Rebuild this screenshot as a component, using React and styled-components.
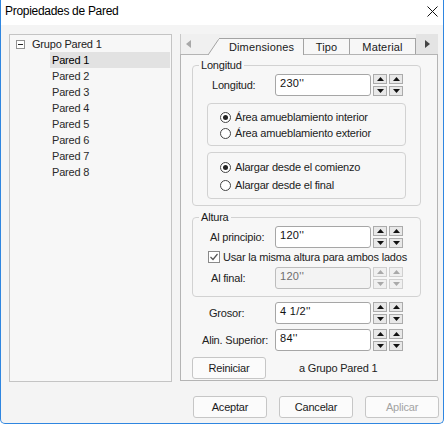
import React from 'react'
import styled, { createGlobalStyle } from 'styled-components'

const GlobalStyle = createGlobalStyle`
  html, body {
    margin: 0;
    padding: 0;
    background: #ffffff;
  }
  body {
    font-family: "Liberation Sans", Arial, sans-serif;
    font-size: 11px;
    color: #1a1a1a;
  }
  * { box-sizing: border-box; }
`

const treeItems = ['Pared 1', 'Pared 2', 'Pared 3', 'Pared 4', 'Pared 5', 'Pared 6', 'Pared 7', 'Pared 8']

function Spin({ disabled }) {
  return (
    <SpinGroup>
      {['up', 'up', 'down', 'down'].map((dir, i) => (
        <SpinBtn key={i} disabled={disabled}>
          <svg width="7" height="4" viewBox="0 0 7 4">
            {dir === 'up'
              ? <polygon points="0,4 7,4 3.5,0" />
              : <polygon points="0,0 7,0 3.5,4" />}
          </svg>
        </SpinBtn>
      ))}
    </SpinGroup>
  )
}

function Radio({ checked, children }) {
  return (
    <RadioItem>
      <svg width="11" height="11" viewBox="0 0 11 11">
        <circle cx="5.5" cy="5.5" r="5" fill="#fff" stroke="#444" strokeWidth="1" />
        {checked && <circle cx="5.5" cy="5.5" r="2.5" fill="#222" />}
      </svg>
      <span>{children}</span>
    </RadioItem>
  )
}

function Field({ label, value, labelLeft, labelWidth, disabled }) {
  return (
    <Row>
      <Label left={labelLeft} width={labelWidth}>{label}</Label>
      <Input disabled={disabled}>{value}</Input>
      <Spin disabled={disabled} />
    </Row>
  )
}

export default function App() {
  return (
    <>
      <GlobalStyle />
      <Window>
        <TitleBar>
          <Title>Propiedades de Pared</Title>
          <CloseBtn>
            <svg width="11" height="11" viewBox="0 0 11 11">
              <path d="M0.5 0.5 L10.5 10.5 M10.5 0.5 L0.5 10.5" stroke="#111" strokeWidth="1" />
            </svg>
          </CloseBtn>
        </TitleBar>
        <Body>
          <Main>
            <Tree>
              <TreeRow>
                <Expander>
                  <svg width="9" height="9" viewBox="0 0 9 9">
                    <rect x="0.5" y="0.5" width="8" height="8" fill="#fff" stroke="#919191" />
                    <path d="M2 4.5 H7" stroke="#222" />
                  </svg>
                </Expander>
                <TreeText>Grupo Pared 1</TreeText>
              </TreeRow>
              {treeItems.map((t, i) => (
                <TreeChild key={t} selected={i === 0}>{t}</TreeChild>
              ))}
            </Tree>
            <TabArea>
              <TabStrip>
                <ArrowBox>
                  <svg width="5" height="8" viewBox="0 0 5 8">
                    <polygon points="5,0 5,8 0,4" fill="#a8a8a8" />
                  </svg>
                </ArrowBox>
                <ActiveTab>
                  <svg width="11" height="16" viewBox="0 0 11 16">
                    <polygon points="0,16 10.5,0.5 11,0.5 11,16" fill="#f7f7f7" />
                    <path d="M0 16 L10.5 0.5 L11 0.5" stroke="#a3a3a3" fill="none" />
                  </svg>
                  <ActiveTabBody>Dimensiones</ActiveTabBody>
                </ActiveTab>
                <Tab width={46}>Tipo</Tab>
                <Tab width={66}>Material</Tab>
                <ArrowBox dark>
                  <svg width="5" height="8" viewBox="0 0 5 8">
                    <polygon points="0,0 0,8 5,4" fill="#444" />
                  </svg>
                </ArrowBox>
              </TabStrip>
              <Panel>
                <Group>
                  <Legend>Longitud</Legend>
                  <Field label="Longitud:" value="230''" labelLeft={19} labelWidth={63} />
                  <RadioBox top={7} gap={16}>
                    <Radio checked>Área amueblamiento interior</Radio>
                    <Radio>Área amueblamiento exterior</Radio>
                  </RadioBox>
                  <RadioBox top={6} gap={18}>
                    <Radio checked>Alargar desde el comienzo</Radio>
                    <Radio>Alargar desde el final</Radio>
                  </RadioBox>
                </Group>
                <Group spaced>
                  <Legend>Altura</Legend>
                  <Field label="Al principio:" value="120''" labelLeft={17} labelWidth={65} />
                  <CheckRow>
                    <svg width="12" height="12" viewBox="0 0 12 12">
                      <rect x="0.5" y="0.5" width="11" height="11" fill="#fff" stroke="#8a8a8a" />
                      <path d="M2.5 6 L5 8.5 L9.5 3" stroke="#555" strokeWidth="1.2" fill="none" />
                    </svg>
                    <span>Usar la misma altura para ambos lados</span>
                  </CheckRow>
                  <Field label="Al final:" value="120''" labelLeft={18} labelWidth={64} disabled />
                </Group>
                <Stack>
                  <Field label="Grosor:" value="4 1/2''" labelLeft={17} labelWidth={66} />
                  <Field label="Alin. Superior:" value="84''" labelLeft={10} labelWidth={73} />
                </Stack>
                <ResetRow>
                  <Button>Reiniciar</Button>
                  <Note>a Grupo Pared 1</Note>
                </ResetRow>
              </Panel>
            </TabArea>
          </Main>
          <Footer>
            <Button>Aceptar</Button>
            <Button>Cancelar</Button>
            <Button disabled>Aplicar</Button>
          </Footer>
        </Body>
      </Window>
    </>
  )
}

const Window = styled.div`
  width: 444px;
  height: 424px;
  border: 1px solid #2f86e0;
  border-top: none;
  border-radius: 0 0 5px 5px;
  background: #f4f4f4;
  overflow: hidden;
  display: flex;
  flex-direction: column;
`

const TitleBar = styled.div`
  height: 25px;
  background: #ffffff;
  display: flex;
  align-items: center;
  justify-content: space-between;
  padding: 0 5px 3px 4px;
`

const Title = styled.div`
  font-size: 12px;
  letter-spacing: -0.3px;
  color: #000;
`

const CloseBtn = styled.div`
  width: 11px;
  height: 11px;
  display: flex;
  margin-top: 1px;
`

const Body = styled.div`
  flex: 1;
  display: flex;
  flex-direction: column;
  padding-top: 9px;
`

const Main = styled.div`
  display: flex;
  gap: 8px;
  padding-left: 8px;
`

const Tree = styled.div`
  width: 163px;
  height: 348px;
  border: 1px solid #c4c4c4;
  background: #f7f7f7;
  padding-top: 1px;
  display: flex;
  flex-direction: column;
`

const TreeRow = styled.div`
  height: 16px;
  display: flex;
  align-items: center;
  padding-left: 6px;
`

const Expander = styled.div`
  width: 9px;
  height: 9px;
  display: flex;
  margin-right: 7px;
`

const TreeText = styled.span`
  font-size: 11px;
  letter-spacing: -0.2px;
  color: #222;
`

const TreeChild = styled.div`
  height: 16px;
  line-height: 16px;
  margin-left: 40px;
  margin-right: 1px;
  padding-left: 2px;
  font-size: 11px;
  letter-spacing: -0.2px;
  background: ${p => (p.selected ? '#e2e2e2' : 'transparent')};
  color: ${p => (p.selected ? '#000' : '#2a2a2a')};
`

const TabArea = styled.div`
  width: 258px;
  display: flex;
  flex-direction: column;
`

const TabStrip = styled.div`
  height: 20px;
  display: flex;
  align-items: flex-end;
  border-left: 1px solid #c9c9c9;
  background: #f0f0f0;
`

const ArrowBox = styled.div`
  width: ${p => (p.dark ? '22px' : '27px')};
  height: 20px;
  display: flex;
  align-items: center;
  justify-content: ${p => (p.dark ? 'center' : 'flex-start')};
  padding-left: ${p => (p.dark ? '0' : '5px')};
  background: ${p => (p.dark ? '#e4e4e4' : 'transparent')};
  margin-left: ${p => (p.dark ? 'auto' : '0')};
`

const ActiveTab = styled.div`
  display: flex;
  align-items: flex-end;
  height: 17px;
  margin-bottom: -1px;
  position: relative;
  z-index: 1;
`

const ActiveTabBody = styled.div`
  width: 85px;
  height: 17px;
  border-top: 1px solid #a3a3a3;
  border-right: 1px solid #a3a3a3;
  background: #f7f7f7;
  display: flex;
  align-items: center;
  justify-content: center;
  padding-left: 1px;
  font-size: 11px;
  letter-spacing: 0.15px;
  color: #1a1a1a;
`

const Tab = styled.div`
  width: ${p => p.width}px;
  height: 16px;
  border-top: 1px solid #a3a3a3;
  border-right: 1px solid #a3a3a3;
  background: #f7f7f7;
  display: flex;
  align-items: center;
  justify-content: center;
  font-size: 11px;
  letter-spacing: 0.15px;
  color: #1a1a1a;
`

const Panel = styled.div`
  height: 327px;
  border: 1px solid #b4b4b4;
  background: #f7f7f7;
  padding: 4px 0 0 11px;
  display: flex;
  flex-direction: column;
`

const Group = styled.fieldset`
  width: 229px;
  margin: ${p => (p.spaced ? '5px' : '0')} 0 0 0;
  padding: 0 0 ${p => (p.spaced ? '7px' : '6px')} 0;
  border: 1px solid #d2d2d2;
  border-radius: 4px;
  min-width: 0;
`

const Legend = styled.legend`
  margin-left: 6px;
  padding: 0 2px;
  font-size: 11px;
  line-height: 13px;
  letter-spacing: -0.2px;
`

const Row = styled.div`
  display: flex;
  align-items: center;
  height: 22px;
  margin-top: 2px;
`

const Label = styled.div`
  margin-left: ${p => p.left}px;
  width: ${p => p.width}px;
  font-size: 11px;
  letter-spacing: -0.2px;
  white-space: nowrap;
  color: #222;
`

const Input = styled.div`
  width: 96px;
  height: 22px;
  border: 1px solid ${p => (p.disabled ? '#bdbdbd' : '#a6a6a6')};
  border-radius: 3px;
  background: ${p => (p.disabled ? '#f3f3f3' : '#ffffff')};
  color: ${p => (p.disabled ? '#6e6e6e' : '#111')};
  padding: 2px 0 0 4px;
  font-size: 11px;
  line-height: 13px;
  letter-spacing: 0.3px;
`

const SpinGroup = styled.div`
  margin-left: 2px;
  display: grid;
  grid-template-columns: 14px 14px;
  grid-template-rows: 10px 10px;
  gap: 2px;
`

const SpinBtn = styled.div`
  border: 1px solid ${p => (p.disabled ? '#d0d0d0' : '#ababab')};
  background: ${p => (p.disabled ? '#f0f0f0' : '#e8e8e8')};
  display: flex;
  align-items: center;
  justify-content: center;
  svg { fill: ${p => (p.disabled ? '#a9a9a9' : '#111')}; }
`

const RadioBox = styled.div`
  margin: ${p => p.top}px 0 0 14px;
  width: 199px;
  border: 1px solid #d2d2d2;
  border-radius: 4px;
  padding: 5px 0 4px 12px;
  display: flex;
  flex-direction: column;
  & > div { height: ${p => p.gap}px; }
`

const RadioItem = styled.div`
  display: flex;
  align-items: center;
  gap: 4px;
  font-size: 11px;
  letter-spacing: -0.2px;
  color: #222;
`

const CheckRow = styled.div`
  height: 16px;
  margin: 1px 0 0 15px;
  display: flex;
  align-items: center;
  gap: 3px;
  font-size: 11px;
  letter-spacing: -0.2px;
  color: #222;
`

const Stack = styled.div`
  display: flex;
  flex-direction: column;
  gap: 3px;
  margin-top: 3px;
`

const ResetRow = styled.div`
  display: flex;
  align-items: center;
  margin-top: 6px;
  gap: 33px;
`

const Button = styled.div`
  width: 74px;
  height: 22px;
  border: 1px solid #c6c6c6;
  border-radius: 3px;
  background: #fbfbfb;
  display: flex;
  align-items: center;
  justify-content: center;
  font-size: 11px;
  letter-spacing: -0.2px;
  color: ${p => (p.disabled ? '#a3a3a3' : '#1a1a1a')};
`

const Note = styled.span`
  font-size: 11px;
  letter-spacing: -0.2px;
  color: #222;
`

const Footer = styled.div`
  display: flex;
  justify-content: flex-end;
  gap: 12px;
  margin-top: 14px;
  padding-right: 4px;
`
